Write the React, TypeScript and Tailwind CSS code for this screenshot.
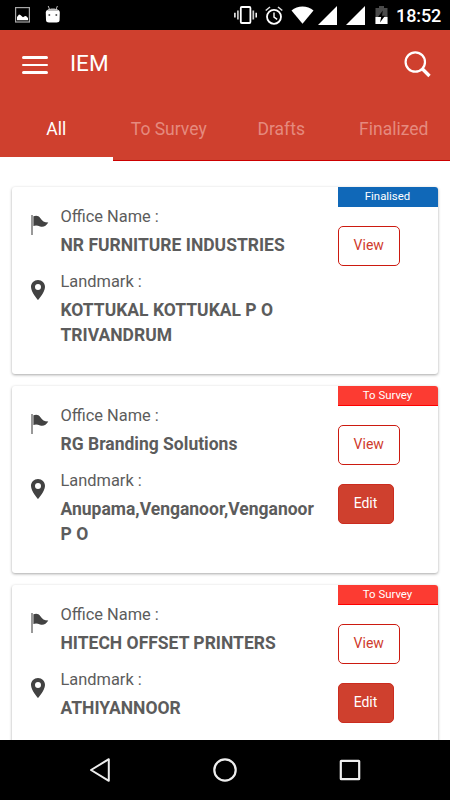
import { useState } from 'react';

const tabs = ['All', 'To Survey', 'Drafts', 'Finalized'];

const surveys = [
  { id: 1, office: 'NR FURNITURE INDUSTRIES', landmark: 'KOTTUKAL KOTTUKAL P O TRIVANDRUM', status: 'Finalised' },
  { id: 2, office: 'RG Branding Solutions', landmark: 'Anupama,Venganoor,Venganoor P O', status: 'To Survey' },
  { id: 3, office: 'HITECH OFFSET PRINTERS', landmark: 'ATHIYANNOOR', status: 'To Survey' },
];

const StatusBar = () => (
  <div className="h-[30px] shrink-0 bg-black text-white flex items-center justify-between pl-[15px] pr-[9px]">
    <div className="flex items-center gap-[15px]">
      {/* Screenshot saved */}
      <svg width="15" height="16" viewBox="0 0 15 16">
        <rect x="0.6" y="0.6" width="13.8" height="14.4" fill="none" stroke="#a8a8a8" strokeWidth="1.2" />
        <path d="M2 13.2V10l2-2.6 1.4.5L8 10.2l1.6-1 1.4-.2 2 2v2.2z" fill="#fff" />
      </svg>
      {/* Debug robot */}
      <svg width="16" height="18" viewBox="0 0 16 18" className="-mt-[3px]">
        <path d="M3.2 1l1.6 4M12.4 1l-1.6 4" stroke="#bbb" strokeWidth="1" />
        <path d="M.8 7.5C1 5 3.5 3.8 7.8 3.8s6.8 1.2 7 3.7l-.2 7.5c-.2 1.8-1.2 2.5-3 2.5H4c-1.8 0-2.800-.7-3-2.500z" fill="#fff" />
        <path d="M2 6C3 4.4 5 3.8 7.8 3.8S12.6 4.4 13.6 6z" fill="#bdbdbd" />
        <circle cx="4.3" cy="10" r="1" fill="#555" />
        <circle cx="11.3" cy="10" r="1" fill="#555" />
      </svg>
    </div>
    <div className="flex items-center">
      {/* Vibrate */}
      <svg width="23" height="18" viewBox="0 0 23 18" className="mr-[8px]">
        <rect x="6.8" y="1" width="9.6" height="16" rx="1" fill="none" stroke="#fff" strokeWidth="1.8" />
        <path d="M3.9 4.5v9M19.3 4.5v9" stroke="#ccc" strokeWidth="1.7" />
        <path d="M.9 6.8v4.6M22.2 6.8v4.6" stroke="#fff" strokeWidth="1.5" />
      </svg>
      {/* Alarm */}
      <svg width="18" height="19" viewBox="0 0 18 19" className="mr-[8px]">
        <circle cx="9" cy="10.8" r="7" fill="none" stroke="#fff" strokeWidth="1.8" />
        <path d="M.7 4.5L5 1M17.3 4.5L13 1" stroke="#ddd" strokeWidth="1.6" />
        <path d="M9 6.5v4.6l3.2 2.2" fill="none" stroke="#fff" strokeWidth="1.4" />
      </svg>
      {/* Wifi */}
      <svg width="23" height="18" viewBox="0 0 23 18" className="mr-[4px]">
        <path d="M.5 4.5C6.5-.9 16.5-.9 22.5 4.5L11.5 17.8z" fill="#fff" />
      </svg>
      <svg width="19" height="19" viewBox="0 0 19 19" className="mr-[9px] mt-[1px]">
        <path d="M19 0v19H0z" fill="#fff" />
      </svg>
      <svg width="19" height="19" viewBox="0 0 19 19" className="mr-[10px] mt-[1px]">
        <path d="M19 0v19H0z" fill="#fff" />
      </svg>
      {/* Battery */}
      <svg width="13" height="18" viewBox="0 0 13 18" className="mr-[8px]">
        <path d="M.5 2H4V0h5v2h3.5v16H.5z" fill="#4a4a4a" />
        <path d="M.5 11h12v7H.5z" fill="#fff" />
        <path d="M7.8 4.5L3 11h3.2L5 16.5 10 9.8H7z" fill="#000" />
      </svg>
      <span className="w-[45px] text-[18px] leading-[30px] font-medium tracking-[-0.1px] whitespace-nowrap pt-[1px]">18:52</span>
    </div>
  </div>
);

const FlagIcon = () => (
  <svg width="18" height="20" viewBox="0 0 18 20" className="mt-[11px]">
    <path d="M1 0v20" stroke="#777" strokeWidth="1.5" />
    <path d="M2.4 1.3C5.4.2 7.5.7 9.4 3.2c1.8 2.8 3.8 4.3 7.9 4.3-2.1 3.3-4.8 5.1-8.2 4-2.5-1-4.5-1.4-6.7-.4z" fill="#424242" />
  </svg>
);

const PinIcon = () => (
  <svg width="14" height="20" viewBox="5 2 14 20" className="mt-[11px]">
    <path fill="#424242" fillRule="evenodd" d="M12 2C8.13 2 5 5.13 5 9c0 5.25 7 13 7 13s7-7.75 7-13c0-3.87-3.13-7-7-7zm0 10a3 3 0 1 1 0-6 3 3 0 0 1 0 6z" />
  </svg>
);

const Field = ({ icon, label, value }: { icon: any; label: string; value: string }) => (
  <div className="flex">
    <div className="w-[30px] shrink-0">{icon}</div>
    <div className="w-[260px]">
      <p className="text-[16.4px] leading-[25px] text-[#5c5c5c]">{label} :</p>
      <p className="mt-[4px] text-[17.5px] leading-[25px] font-bold text-[#5c5c5c]">{value}</p>
    </div>
  </div>
);

const SurveyCard = ({ survey }: { survey: any }) => {
  const finalised = survey.status === 'Finalised';
  return (
    <div className="h-[186.5px] shrink-0 bg-white rounded-[3px] overflow-hidden flex justify-between shadow-[0_1px_3px_rgba(0,0,0,0.35)]">
      <div className="pl-[18.5px] pt-[17px] flex flex-col gap-[11px]">
        <Field icon={<FlagIcon />} label="Office Name" value={survey.office} />
        <Field icon={<PinIcon />} label="Landmark" value={survey.landmark} />
      </div>
      <div className="w-[100px] shrink-0 flex flex-col items-start">
        <div className={`w-full h-[20px] text-center text-[11.4px] leading-[18px] text-white ${finalised ? 'bg-[#1068b8]' : 'bg-[#fc3b32] border-b border-[#f00]'}`}>
          {survey.status}
        </div>
        <button className="mt-[19px] w-[62.5px] h-[40px] rounded-[5px] border border-[#cc1a10] text-[14px] text-[#cf3a2c] pb-[1px]">View</button>
        {!finalised && (
          <button className="mt-[19px] w-[56px] h-[39.5px] rounded-[5px] border border-[#cb2c1f] bg-[#cf402e] text-[14px] text-white pb-[1px]">Edit</button>
        )}
      </div>
    </div>
  );
};

export default function App() {
  const [activeTab, setActiveTab] = useState('All');

  return (
    <div className="w-[450px] h-[800px] flex flex-col overflow-hidden bg-white font-[Roboto,sans-serif]">
      <StatusBar />

      {/* Header */}
      <header className="h-[131px] shrink-0 bg-[#cf402e] text-white flex flex-col">
        <div className="h-[68px] flex items-center pl-[22px] pr-[18px]">
          <button className="flex flex-col gap-[5px] mt-[2px]">
            <span className="block w-[26px] h-[2.5px] rounded-full bg-white" />
            <span className="block w-[26px] h-[2.5px] rounded-full bg-white" />
            <span className="block w-[26px] h-[2.5px] rounded-full bg-white" />
          </button>
          <h1 className="ml-[22px] text-[22.5px] leading-[30px] pb-[2px]">IEM</h1>
          <svg width="28" height="28" viewBox="0 0 28 28" className="ml-auto">
            <circle cx="11.3" cy="12" r="9.7" fill="none" stroke="#fff" strokeWidth="2.2" />
            <path d="M18 18.5l7.5 7.5" stroke="#fff" strokeWidth="3.4" />
          </svg>
        </div>
        <nav className="grid grid-cols-4 flex-1">
          {tabs.map(tab => (
            <button
              key={tab}
              onClick={() => setActiveTab(tab)}
              className={`text-[17.5px] ${activeTab === tab ? 'border-b-4 border-white text-white pt-[4px]' : 'border-b border-[#cc0000] text-[#e58a7e]'}`}
            >
              {tab}
            </button>
          ))}
        </nav>
      </header>

      {/* Survey list */}
      <main className="flex-1 min-h-0 overflow-hidden flex flex-col gap-[12.5px] pt-[26px] pl-[12px] pr-[12.5px]">
        {surveys.map(survey => (
          <SurveyCard key={survey.id} survey={survey} />
        ))}
      </main>

      {/* System navigation */}
      <footer className="h-[60px] shrink-0 bg-black flex items-center justify-between pl-[88px] pr-[88px]">
        <svg width="24" height="26" viewBox="0 0 24 26">
          <path d="M20.8 2.2v21.6L3 13z" fill="none" stroke="#eee" strokeWidth="2" strokeLinejoin="round" />
        </svg>
        <svg width="24" height="24" viewBox="0 0 24 24">
          <circle cx="12" cy="12" r="10.7" fill="none" stroke="#eee" strokeWidth="2.2" />
        </svg>
        <svg width="24" height="24" viewBox="0 0 24 24">
          <rect x="2.8" y="2.8" width="18.4" height="18.4" rx="0.5" fill="none" stroke="#eee" strokeWidth="2.2" />
        </svg>
      </footer>
    </div>
  );
}
